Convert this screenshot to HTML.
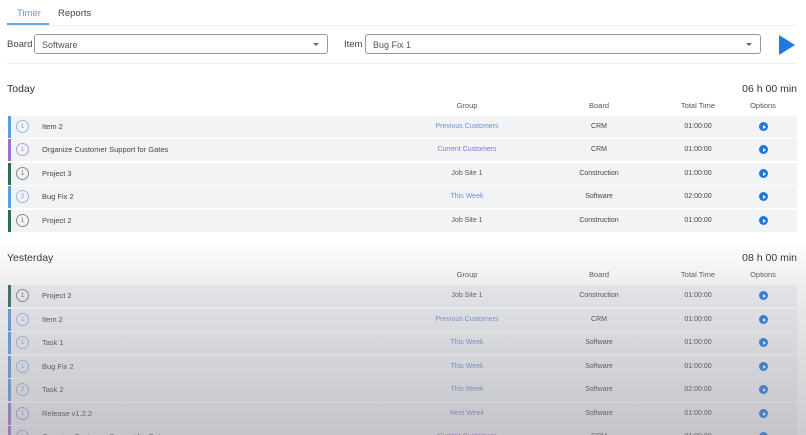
<!DOCTYPE html>
<html style="width:806px;height:435px;overflow:hidden"><head><meta charset="utf-8">
<style>
*{box-sizing:border-box;margin:0;padding:0}
body{width:806px;height:435px;overflow:hidden;background:#fff;font-family:"Liberation Sans",sans-serif;color:#333;position:relative}
.abs{position:absolute}
.tab{top:8px;font-size:9.5px}
.sel{position:absolute;top:34px;height:20px;border:1px solid #999;border-radius:3px;font-size:9px;color:#555;padding:5px 0 0 7px}
.sel:after{content:"";position:absolute;right:8px;top:8px;border:3px solid transparent;border-top:3px solid #666}
.lbl{position:absolute;top:39px;font-size:9.5px;color:#444}
.h{font-size:10.5px;color:#333}
.hr{position:absolute;right:9px;font-size:10.5px;color:#333}
.th{position:absolute;font-size:7.5px;color:#555;text-align:center;width:100px}
.row{position:absolute;left:8px;width:789px;height:22px;background:#f2f3f5;line-height:22px}
.row .bar{position:absolute;left:0;top:0;width:3px;height:22px}
.row .c{position:absolute;left:8px;top:4px;width:13px;height:13px;border:1px solid;border-radius:50%;font-size:6.5px;text-align:center;line-height:11px}
.row .n{position:absolute;left:34px;top:0;font-size:7.5px;color:#444}
.row .g,.row .b,.row .t{position:absolute;top:0;font-size:7px;width:140px;text-align:center}
.row .g{left:389px}.row .b{left:521px;color:#444}.row .t{left:620px;color:#444}
.row .o{position:absolute;left:751px;top:6px;width:9px;height:9px;border-radius:50%;background:#1e78e0}
.row .o:after{content:"";position:absolute;left:3.5px;top:2.5px;border-left:3px solid #fff;border-top:2px solid transparent;border-bottom:2px solid transparent}
.blue{--c:#5b9be0}.purple{--c:#a070d0}.green{--c:#2a6e58}
.blue .bar,.purple .bar,.green .bar{background:var(--c)}
.blue .c{border-color:#9bb8e0;color:#8aa8d8}.purple .c{border-color:#b89ad8;color:#a688c8}.green .c{border-color:#888;color:#777}
.gb{color:#6a8fd8}.gp{color:#9a6ad0}.gg{color:#555}
#fade{position:absolute;left:0;top:240px;width:806px;height:195px;background:linear-gradient(to bottom,rgba(150,150,160,0) 0%,rgba(150,150,160,0.18) 25%,rgba(140,140,150,0.45) 100%);pointer-events:none}
</style></head><body>
<div class="abs tab" style="left:17px;color:#5b9be0">Timer</div>
<div class="abs tab" style="left:58px;color:#444">Reports</div>
<div class="abs" style="left:7px;top:23px;width:42px;height:2px;background:#6aa8e8"></div>
<div class="abs" style="left:7px;top:25px;width:790px;height:1px;background:#eee"></div>
<div class="lbl" style="left:7px">Board</div>
<div class="sel" style="left:34px;width:294px">Software</div>
<div class="lbl" style="left:344px">Item</div>
<div class="sel" style="left:365px;width:396px">Bug Fix 1</div>
<svg class="abs" style="left:778px;top:35px" width="17" height="20"><path d="M1 0 L17 10 L1 20Z" fill="#1e78e0"/></svg>
<div class="abs" style="left:7px;top:63px;width:790px;height:1px;background:#eee"></div>

<div class="abs h" style="left:7px;top:83px">Today</div>
<div class="hr" style="top:83px">06 h 00 min</div>
<div class="th" style="left:417px;top:101px">Group</div>
<div class="th" style="left:549px;top:101px">Board</div>
<div class="th" style="left:648px;top:101px">Total Time</div>
<div class="th" style="left:713px;top:101px">Options</div>

<div class="row blue" style="top:116px"><div class="bar"></div><div class="c">1</div><div class="n">Item 2</div><div class="g gb">Previous Customers</div><div class="b">CRM</div><div class="t">01:00:00</div><div class="o"></div></div>
<div class="row purple" style="top:139px"><div class="bar"></div><div class="c">1</div><div class="n">Organize Customer Support for Gates</div><div class="g gp">Current Customers</div><div class="b">CRM</div><div class="t">01:00:00</div><div class="o"></div></div>
<div class="row green" style="top:163px"><div class="bar"></div><div class="c">1</div><div class="n">Project 3</div><div class="g gg">Job Site 1</div><div class="b">Construction</div><div class="t">01:00:00</div><div class="o"></div></div>
<div class="row blue" style="top:186px"><div class="bar"></div><div class="c">2</div><div class="n">Bug Fix 2</div><div class="g gb">This Week</div><div class="b">Software</div><div class="t">02:00:00</div><div class="o"></div></div>
<div class="row green" style="top:210px"><div class="bar"></div><div class="c">1</div><div class="n">Project 2</div><div class="g gg">Job Site 1</div><div class="b">Construction</div><div class="t">01:00:00</div><div class="o"></div></div>

<div class="abs h" style="left:7px;top:252px">Yesterday</div>
<div class="hr" style="top:252px">08 h 00 min</div>
<div class="th" style="left:417px;top:270px">Group</div>
<div class="th" style="left:549px;top:270px">Board</div>
<div class="th" style="left:648px;top:270px">Total Time</div>
<div class="th" style="left:713px;top:270px">Options</div>

<div class="row green" style="top:285px"><div class="bar"></div><div class="c">1</div><div class="n">Project 2</div><div class="g gg">Job Site 1</div><div class="b">Construction</div><div class="t">01:00:00</div><div class="o"></div></div>
<div class="row blue" style="top:309px"><div class="bar"></div><div class="c">1</div><div class="n">Item 2</div><div class="g gb">Previous Customers</div><div class="b">CRM</div><div class="t">01:00:00</div><div class="o"></div></div>
<div class="row blue" style="top:332px"><div class="bar"></div><div class="c">1</div><div class="n">Task 1</div><div class="g gb">This Week</div><div class="b">Software</div><div class="t">01:00:00</div><div class="o"></div></div>
<div class="row blue" style="top:356px"><div class="bar"></div><div class="c">1</div><div class="n">Bug Fix 2</div><div class="g gb">This Week</div><div class="b">Software</div><div class="t">01:00:00</div><div class="o"></div></div>
<div class="row blue" style="top:379px"><div class="bar"></div><div class="c">2</div><div class="n">Task 2</div><div class="g gb">This Week</div><div class="b">Software</div><div class="t">02:00:00</div><div class="o"></div></div>
<div class="row purple" style="top:403px"><div class="bar"></div><div class="c">1</div><div class="n">Release v1.2.2</div><div class="g gp">Next Week</div><div class="b">Software</div><div class="t">01:00:00</div><div class="o"></div></div>
<div class="row purple" style="top:426px;height:9px;overflow:hidden"><div class="bar"></div><div class="c">1</div><div class="n">Organize Customer Support for Gates</div><div class="g gp">Current Customers</div><div class="b">CRM</div><div class="t">01:00:00</div><div class="o"></div></div>

<div id="fade"></div>
</body></html>
